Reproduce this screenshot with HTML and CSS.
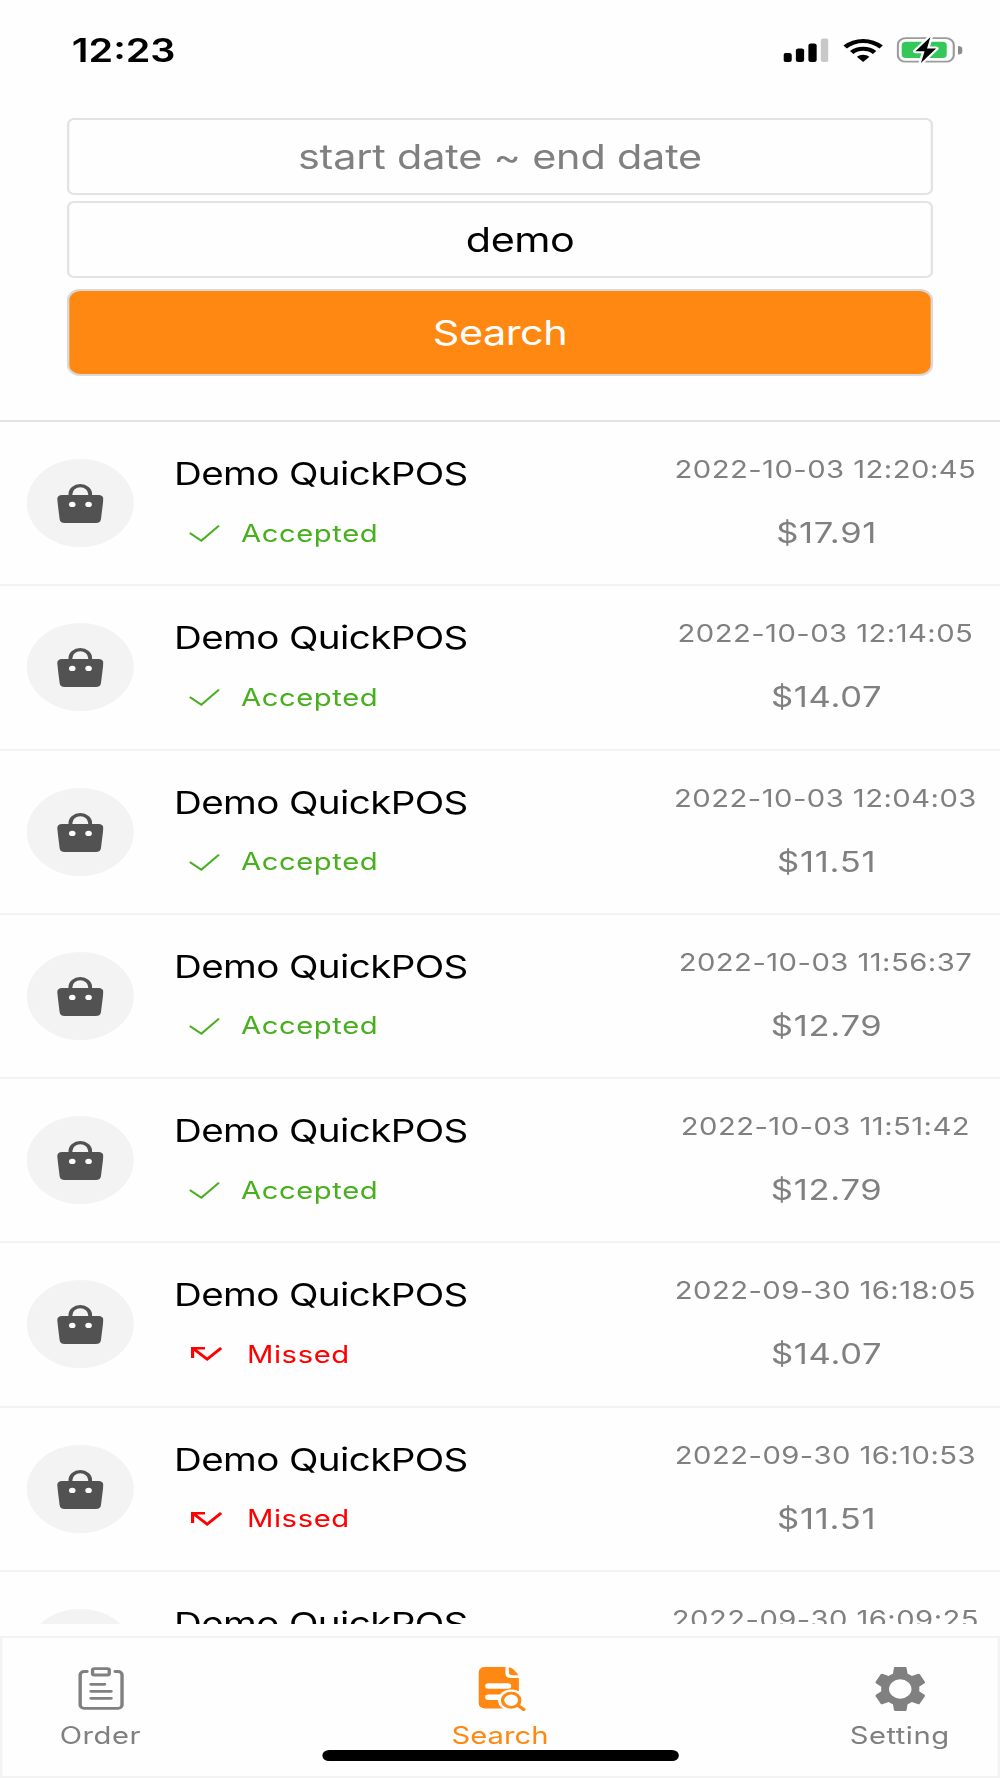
FILE: index.html
```
<!DOCTYPE html>
<html lang="en">
<head>
    <meta charset="UTF-8">
    <meta name="viewport" content="width=device-width, initial-scale=1.0">
    <title>Search</title>
    <link rel="stylesheet" href="styles.css">
</head>
<body>

<svg width="0" height="0" class="icon-defs">
    <symbol id="icon-bag" viewBox="0 0 38 39">
        <path d="M10.9 13V10a8.1 8.4 0 0 1 16.2 0V13" fill="none" stroke="#525252" stroke-width="3.2"/>
        <path d="M4 11h30a4 4 0 0 1 4 4.5l-2 19.5a4.3 4.3 0 0 1-4.2 4H6.2a4.3 4.3 0 0 1-4.2-4L0 15.5a4 4 0 0 1 4-4.5z" fill="#525252"/>
        <circle cx="12.4" cy="20.4" r="2.7" fill="#fefefe"/>
        <circle cx="25.8" cy="20.4" r="2.7" fill="#fefefe"/>
    </symbol>
    <symbol id="icon-check" viewBox="0 0 26 18">
        <path d="M1 9L10.5 16.7L25 1.7" fill="none" stroke="#48b01e" stroke-width="1.8"/>
    </symbol>
    <symbol id="icon-missed" viewBox="0 0 26 15">
        <path d="M1.3 11.5V1.8H11.5M1.8 2L13.3 12.6L24.8 1.5" fill="none" stroke="#ff0000" stroke-width="2.6"/>
    </symbol>
</svg>

<div class="screen">
    <div class="status-bar">
        <div class="time">12:23</div>
        <svg class="signal" viewBox="0 0 37 24">
            <rect x="0" y="15" width="6.8" height="9" rx="2"/>
            <rect x="10.2" y="10.5" width="6.8" height="13.5" rx="2"/>
            <rect x="20.5" y="5.5" width="6.8" height="18.5" rx="2"/>
            <rect x="30.7" y="0.5" width="6.3" height="23.5" rx="2" fill="#c8c8c8"/>
        </svg>
        <svg class="wifi" viewBox="0 0 33 24">
            <path d="M0.3 7.5A23.5 23.5 0 0 1 32.7 7.5L29.9 10.4A19.4 19.4 0 0 0 3.1 10.4z"/>
            <path d="M5.7 13A16 16 0 0 1 27.3 13L24.5 15.9A11.9 11.9 0 0 0 8.5 15.9z"/>
            <path d="M11.3 18.7A8 8 0 0 1 21.7 18.7L16.5 24z"/>
        </svg>
        <svg class="battery" viewBox="0 0 54 30">
            <rect x="1" y="3.2" width="46" height="23.5" rx="6.5" fill="none" stroke="#9b9b9b" stroke-width="1.8"/>
            <path d="M50.5 11a4.2 4.2 0 0 1 0 8.4z" fill="#8a8a8a"/>
            <rect x="4.2" y="6.8" width="37" height="16.3" rx="3.5" fill="#34c759"/>
            <path d="M27.8 2L15.5 16.3H23L20 28L32.5 13.5H25z" fill="#000" stroke="#fefefe" stroke-width="4" stroke-linejoin="round" paint-order="stroke"/>
        </svg>
    </div>

    <form class="search-form" onsubmit="return false">
        <input type="text" class="field" placeholder="start date ~ end date">
        <input type="text" class="field keyword" value="demo">
        <button class="search-button">Search</button>
    </form>

    <div class="order-list">
        <div class="order">
            <div class="avatar"><svg><use href="#icon-bag"/></svg></div>
            <div class="info">
                <div class="name">Demo QuickPOS</div>
                <div class="state accepted"><svg><use href="#icon-check"/></svg><span>Accepted</span></div>
            </div>
            <div class="detail">
                <div class="date">2022-10-03 12:20:45</div>
                <div class="price">$17.91</div>
            </div>
        </div>
        <div class="order">
            <div class="avatar"><svg><use href="#icon-bag"/></svg></div>
            <div class="info">
                <div class="name">Demo QuickPOS</div>
                <div class="state accepted"><svg><use href="#icon-check"/></svg><span>Accepted</span></div>
            </div>
            <div class="detail">
                <div class="date">2022-10-03 12:14:05</div>
                <div class="price">$14.07</div>
            </div>
        </div>
        <div class="order">
            <div class="avatar"><svg><use href="#icon-bag"/></svg></div>
            <div class="info">
                <div class="name">Demo QuickPOS</div>
                <div class="state accepted"><svg><use href="#icon-check"/></svg><span>Accepted</span></div>
            </div>
            <div class="detail">
                <div class="date">2022-10-03 12:04:03</div>
                <div class="price">$11.51</div>
            </div>
        </div>
        <div class="order">
            <div class="avatar"><svg><use href="#icon-bag"/></svg></div>
            <div class="info">
                <div class="name">Demo QuickPOS</div>
                <div class="state accepted"><svg><use href="#icon-check"/></svg><span>Accepted</span></div>
            </div>
            <div class="detail">
                <div class="date">2022-10-03 11:56:37</div>
                <div class="price">$12.79</div>
            </div>
        </div>
        <div class="order">
            <div class="avatar"><svg><use href="#icon-bag"/></svg></div>
            <div class="info">
                <div class="name">Demo QuickPOS</div>
                <div class="state accepted"><svg><use href="#icon-check"/></svg><span>Accepted</span></div>
            </div>
            <div class="detail">
                <div class="date">2022-10-03 11:51:42</div>
                <div class="price">$12.79</div>
            </div>
        </div>
        <div class="order">
            <div class="avatar"><svg><use href="#icon-bag"/></svg></div>
            <div class="info">
                <div class="name">Demo QuickPOS</div>
                <div class="state missed"><svg><use href="#icon-missed"/></svg><span>Missed</span></div>
            </div>
            <div class="detail">
                <div class="date">2022-09-30 16:18:05</div>
                <div class="price">$14.07</div>
            </div>
        </div>
        <div class="order">
            <div class="avatar"><svg><use href="#icon-bag"/></svg></div>
            <div class="info">
                <div class="name">Demo QuickPOS</div>
                <div class="state missed"><svg><use href="#icon-missed"/></svg><span>Missed</span></div>
            </div>
            <div class="detail">
                <div class="date">2022-09-30 16:10:53</div>
                <div class="price">$11.51</div>
            </div>
        </div>
        <div class="order">
            <div class="avatar"></div>
            <div class="info">
                <div class="name">Demo QuickPOS</div>
            </div>
            <div class="detail">
                <div class="date">2022-09-30 16:09:25</div>
            </div>
        </div>
    </div>

    <div class="tab-bar">
        <div class="tab">
            <svg viewBox="0 0 44 44">
                <g fill="none" stroke="#808080" stroke-width="2.8" stroke-linecap="round" stroke-linejoin="round">
                    <path d="M10.5 4.5H8.2a3.3 3.3 0 0 0-3.3 3.3V38a3.3 3.3 0 0 0 3.3 3.3H36a3.3 3.3 0 0 0 3.300-3.300V7.8A3.300 3.300 0 0 0 36 4.500H33.700"/>
                    <rect x="15.1" y="1.6" width="13.7" height="6.4" rx="1.5"/>
                    <path d="M13.8 17.300H25M13.800 24.300H30.300M13.800 31.300H30.300"/>
                </g>
            </svg>
            <div>Order</div>
        </div>
        <div class="tab active">
            <svg viewBox="0 0 44 44">
                <path d="M9.500 0H26.500V7a4 4 0 0 0 4 4H37.500V41.500H9.500a5 5 0 0 1-5-5V5a5 5 0 0 1 5-5z" fill="#ff8812"/>
                <path d="M29.300 0.300C32 0.600 35 4 37 8.200H32.300a3 3 0 0 1-3-3z" fill="#ff8812"/>
                <path d="M12.500 19H28.500M12.500 30.200H24" fill="none" stroke="#fefefe" stroke-width="5.400" stroke-linecap="round"/>
                <circle cx="31.200" cy="33.200" r="10.800" fill="#fefefe"/>
                <circle cx="31.200" cy="33.200" r="7.100" fill="none" stroke="#ff8812" stroke-width="2.800"/>
                <path d="M36.800 38.400L41.500 42.500" stroke="#ff8812" stroke-width="3" stroke-linecap="round"/>
            </svg>
            <div>Search</div>
        </div>
        <div class="tab">
            <svg viewBox="1.5 2 21 20" preserveAspectRatio="none">
                <path fill="#808080" fill-rule="evenodd" d="M19.43 12.98c.04-.32.07-.64.07-.98s-.03-.66-.07-.98l2.11-1.65c.19-.15.24-.42.12-.64l-2-3.46c-.12-.22-.39-.3-.61-.22l-2.49 1c-.52-.4-1.08-.73-1.69-.98l-.38-2.65C14.46 2.18 14.25 2 14 2h-4c-.25 0-.46.18-.49.42l-.38 2.65c-.61.25-1.17.59-1.69.98l-2.49-1c-.23-.09-.49 0-.61.22l-2 3.46c-.13.22-.07.49.12.64l2.11 1.65c-.04.32-.07.65-.07.98s.03.66.07.98l-2.11 1.65c-.19.15-.24.42-.12.64l2 3.46c.12.22.39.3.61.22l2.49-1c.52.4 1.08.73 1.69.98l.38 2.65c.03.24.24.42.49.42h4c.25 0 .46-.18.49-.42l.38-2.65c.61-.25 1.17-.59 1.69-.98l2.49 1c.23.09.49 0 .61-.22l2-3.46c.12-.22.07-.49-.12-.64l-2.11-1.65zM12 16.4a4.4 4.4 0 1 1 0-8.8 4.4 4.4 0 0 1 0 8.8z"/>
            </svg>
            <div>Setting</div>
        </div>
        <div class="home-indicator"></div>
    </div>
</div>

</body>
</html>
```
FILE: styles.css
```
* {
    box-sizing: border-box;
}
body {
    margin: 0;
    background-color: #fefefe;
    overflow: hidden;
}
.icon-defs {
    position: absolute;
}
.screen {
    display: flex;
    flex-direction: column;
    width: 822px;
    height: 1778px;
    transform: scaleX(1.21655);
    transform-origin: 0 0;
    font-family: Inter, "Liberation Sans", sans-serif;
    color: #000;
}
.status-bar {
    display: flex;
    align-items: center;
    height: 118px;
    padding: 0 31px 18px 59px;
}
.time {
    margin-right: auto;
    font-size: 32.5px;
    font-weight: 600;
}
.signal {
    width: 37px;
    height: 24px;
    margin-right: 12px;
}
.wifi {
    width: 33px;
    height: 24px;
    margin-right: 11px;
}
.battery {
    width: 54px;
    height: 30px;
}
.search-form {
    display: flex;
    flex-direction: column;
    height: 304px;
    padding: 0 55px;
    border-bottom: 2px solid #e3e3e3;
}
.field {
    width: 100%;
    height: 77px;
    margin-bottom: 6px;
    padding: 0;
    border: 2px solid #e3e3e3;
    border-radius: 6px;
    background-color: #fefefe;
    font-family: inherit;
    font-size: 34px;
    letter-spacing: -0.15px;
    text-align: center;
    color: #000;
}
.field::placeholder {
    color: #808080;
}
.keyword {
    padding-left: 33px;
    letter-spacing: -0.4px;
}
.search-button {
    height: 87px;
    margin-top: 5px;
    padding: 0;
    border: 2px solid #d9d9d9;
    border-radius: 11px;
    background-color: #ff8812;
    font-family: inherit;
    font-size: 34px;
    letter-spacing: -0.4px;
    color: #fff;
}
.order-list {
    height: 1202px;
    overflow: hidden;
}
.order {
    display: flex;
    height: 164.25px;
    padding-left: 22px;
    border-bottom: 2px solid #f3f3f3;
}
.avatar {
    display: flex;
    justify-content: center;
    width: 88px;
    height: 88px;
    margin-top: 37px;
    padding-top: 25px;
    border-radius: 50%;
    background-color: #f3f3f3;
}
.avatar svg {
    width: 38px;
    height: 39px;
}
.info {
    margin-left: 33px;
    padding-top: 32px;
}
.name {
    line-height: 40px;
    font-size: 31.7px;
    letter-spacing: -0.5px;
}
.state {
    display: flex;
    align-items: center;
    height: 30px;
    margin-top: 24px;
    font-size: 24px;
    letter-spacing: 0.5px;
}
.state svg {
    width: 26px;
    height: 18px;
}
.accepted {
    padding-left: 12px;
    gap: 17px;
    color: #48b01e;
}
.missed {
    padding-left: 14px;
    gap: 20px;
    color: #ff0000;
}
.detail {
    width: 287px;
    margin-left: auto;
    padding-top: 33px;
    text-align: center;
    color: #808080;
}
.date {
    line-height: 30px;
    font-size: 24px;
    letter-spacing: 0.38px;
}
.price {
    margin-top: 30px;
    padding-left: 2px;
    line-height: 36px;
    font-size: 28.4px;
    letter-spacing: 0.6px;
}
.tab-bar {
    position: relative;
    display: flex;
    justify-content: space-between;
    height: 142px;
    margin-top: 12px;
    border: 2px solid #f3f3f3;
}
.tab {
    display: flex;
    flex-direction: column;
    align-items: center;
    width: 161px;
    padding-top: 29px;
    line-height: 30px;
    font-size: 24px;
    letter-spacing: 0.4px;
    color: #808080;
}
.tab svg {
    width: 44px;
    height: 44px;
    margin-bottom: 10px;
}
.active {
    letter-spacing: 0;
    color: #ff8812;
}
.home-indicator {
    position: absolute;
    left: 263px;
    bottom: 15px;
    width: 293px;
    height: 11px;
    border-radius: 6px;
    background-color: #000;
}
```
